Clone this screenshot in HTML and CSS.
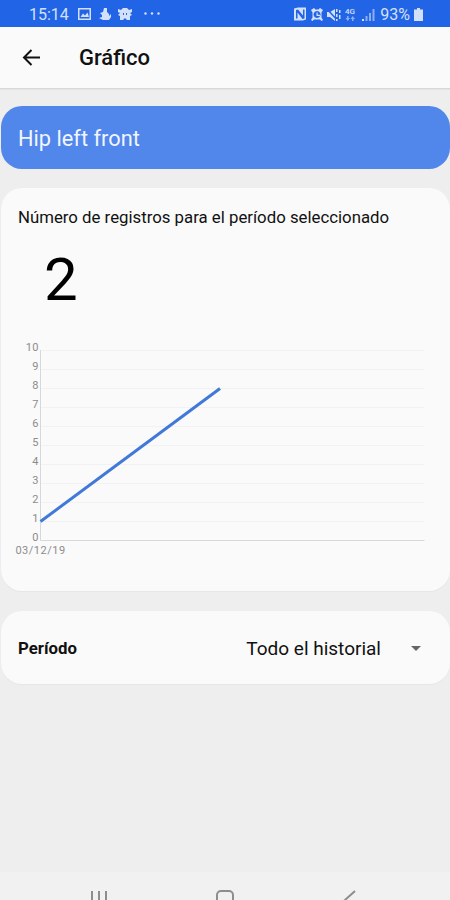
FILE: index.html
```
<!DOCTYPE html>
<html lang="es">
<head>
    <meta charset="utf-8">
    <title>Gráfico</title>
    <link rel="stylesheet" href="styles.css">
</head>
<body>
<div class="screen">
    <div class="status-bar">
        <span class="status-time">15:14</span>
        <svg class="status-left" width="84" height="16" viewBox="0 0 84 16">
            <path fill-rule="evenodd" d="M1 1h13v12H1zM2.500 2.500v9h10v-9zM3.500 10l2.500-3.500 2 2 2.500-3 1.500 4.500z"/>
            <path d="M27 1h3v4l2 2v2l2-2v3l-2 3h-6l-4-2 3-1v-2l-2-2 3-1z"/>
            <path fill-rule="evenodd" d="M41 2l3 1 2-2h4l2 2 3-1v3l-2 1 2 2-2 1v4h-3l-2-2-2 2h-3V9l-2-1 2-2-2-1zM46 6v2h1V6zm3 0v2h1V6z"/>
            <circle cx="68.500" cy="6.500" r="1.200"/>
            <circle cx="75" cy="6.500" r="1.200"/>
            <circle cx="81.500" cy="6.500" r="1.200"/>
        </svg>
        <svg class="status-right" width="82" height="16" viewBox="0 0 82 16">
            <path fill-rule="evenodd" d="M0 1.500L4 .5h8v12l-3 1H0zM2 3v8.500h1.500v-6l5 6.500 2-.5v-9H9v6l-5-6z"/>
            <path fill-rule="evenodd" d="M17 3l3-2 1.500 1.500h3L26 1l3 2-1.500 2.500v5L29 13l-1.500 1-1.500-1.500h-6L18.500 14 17 13l1.500-2.500v-5zM23 4a3.500 3.500 0 1 0 .1 0zM22.500 5.500h1.200v2.300H26V9h-3.500z"/>
            <path d="M33 5h3l5-3v12l-5-4h-3z"/>
            <path class="status-cut" d="M33 2l11 12"/>
            <path d="M42 2h1.500v3H42zM42 7h1.500v3H42zM42 12h1.500v2H42zM45 3h1.500v3H45zM45 8h1.500v4H45z"/>
            <text x="51" y="7">4G</text>
            <path class="status-dim" d="M53 9h1.500v2h1.500l-2.200 3-2.300-3H53zM58 14h1.500v-2H61l-2.200-3-2.300 3H58z"/>
            <path d="M68 12h2v2h-2z"/>
            <path class="status-dim" d="M71.500 9h2v5h-2zM75 6h2v8h-2zM78.500 2h2v12h-2z"/>
        </svg>
        <span class="status-percent">93%</span>
        <svg class="status-battery" width="9" height="14" viewBox="0 0 9 14">
            <path d="M3 0h3v1.500h3V13H0V1.500h3z"/>
        </svg>
    </div>

    <div class="app-bar">
        <svg class="back" width="20" height="20" viewBox="0 0 20 20">
            <path d="M19 9.500H3M10.500 2L3 9.500l7.500 7.500"/>
        </svg>
        <h1 class="app-title">Gráfico</h1>
    </div>

    <div class="content">
        <div class="zone">Hip left front</div>

        <div class="card chart-card">
            <div class="card-label">Número de registros para el período seleccionado</div>
            <div class="total">2</div>
            <svg class="chart" width="420" height="230" viewBox="0 0 420 230">
                <path class="grid" d="M28 18.500h384M28 37.500h384M28 56.500h384M28 75.500h384M28 94.500h384M28 113.500h384M28 132.500h384M28 151.500h384M28 170.500h384M28 189.500h384"/>
                <path class="axis" d="M28.500 18v190.500H412.500"/>
                <g class="y-labels">
                    <text x="27" y="19">10</text>
                    <text x="27" y="38">9</text>
                    <text x="27" y="57">8</text>
                    <text x="27" y="76">7</text>
                    <text x="27" y="95">6</text>
                    <text x="27" y="114">5</text>
                    <text x="27" y="133">4</text>
                    <text x="27" y="152">3</text>
                    <text x="27" y="171">2</text>
                    <text x="27" y="190">1</text>
                    <text x="27" y="208.500">0</text>
                </g>
                <text class="x-label" x="28.500" y="222">03/12/19</text>
                <path class="line" d="M28.500 189.500L208 56.500"/>
            </svg>
        </div>

        <div class="card period-card">
            <span class="period-name">Período</span>
            <span class="period-value">Todo el historial</span>
            <span class="caret"></span>
        </div>
    </div>

    <div class="nav-bar">
        <svg width="18" height="18" viewBox="0 0 18 18">
            <path d="M2 1v16M9 1v16M16 1v16"/>
        </svg>
        <svg width="18" height="18" viewBox="0 0 18 18">
            <rect x="1" y="1" width="16" height="16" rx="4"/>
        </svg>
        <svg width="18" height="18" viewBox="0 0 18 18">
            <path d="M14 1L4 10l10 8"/>
        </svg>
    </div>
</div>
</body>
</html>
```

FILE: styles.css
```
html, body {
    margin: 0;
    height: 900px;
    overflow: hidden;
    background-color: #eee;
    color: #111;
    font-family: Roboto, sans-serif;
}

.screen {
    display: flex;
    flex-direction: column;
    height: 900px;
}

.status-bar {
    display: flex;
    align-items: center;
    box-sizing: border-box;
    height: 27px;
    padding: 2px 27px 0 29px;
    background-color: #2264e6;
    color: #d3e0fa;
    fill: #d3e0fa;
    font-size: 16px;
}

.status-time {
    width: 48px;
}

.status-right {
    margin-left: auto;
    margin-right: 4px;
    font-size: 8px;
    font-weight: 500;
}

.status-cut {
    stroke: #2264e6;
    stroke-width: 1.5;
}

.status-dim {
    opacity: 0.6;
}

.status-battery {
    margin-left: 4px;
}

.app-bar {
    display: flex;
    align-items: center;
    box-sizing: border-box;
    height: 62px;
    padding-left: 21px;
    background-color: #fafafa;
    border-bottom: 1px solid #d8d8d8;
    box-shadow: 0 1px 1px #e4e4e4;
}

.back {
    fill: none;
    stroke: #111;
    stroke-width: 2;
}

.app-title {
    margin: 0 0 0 38px;
    font-size: 22px;
    font-weight: 500;
}

.content {
    display: flex;
    flex-direction: column;
    flex: 1;
    padding: 17px 0 0 1px;
}

.zone {
    box-sizing: border-box;
    height: 63px;
    margin-bottom: 19px;
    padding-left: 17px;
    border-radius: 21px;
    background-color: #5186eb;
    color: #f0f5ff;
    font-size: 21.8px;
    line-height: 65px;
}

.card {
    box-sizing: border-box;
    border-radius: 21px;
    background-color: #fafafa;
    box-shadow: 0 1px 1px #e6e6e6;
}

.chart-card {
    height: 403px;
    margin-bottom: 20px;
    padding: 18px 0 0 17px;
}

.card-label {
    font-size: 16.8px;
    line-height: 22px;
}

.total {
    margin-top: 17px;
    padding-left: 26px;
    color: #000;
    font-size: 60px;
    line-height: 70px;
}

.chart {
    display: block;
    margin: 17px 0 0 -6px;
}

.grid {
    fill: none;
    stroke: #f2f2f2;
}

.axis {
    fill: none;
    stroke: #d8d8da;
}

.y-labels, .x-label {
    fill: #8c8c8c;
    font-size: 11px;
    letter-spacing: 0.5px;
}

.y-labels {
    text-anchor: end;
}

.x-label {
    text-anchor: middle;
}

.line {
    fill: none;
    stroke: #4179d8;
    stroke-width: 3;
}

.period-card {
    display: flex;
    align-items: center;
    height: 73px;
    padding: 1px 29px 0 17px;
}

.period-name {
    font-size: 16.8px;
    font-weight: 700;
}

.period-value {
    margin-left: auto;
    font-size: 19px;
}

.caret {
    margin-left: 30px;
    border: 5px solid transparent;
    border-top-color: #666;
    border-bottom: none;
}

.nav-bar {
    display: flex;
    box-sizing: border-box;
    height: 28px;
    padding: 18px 91px 0 90px;
    justify-content: space-between;
    background-color: #f1f1f1;
    fill: none;
    stroke: #8e8e8e;
    stroke-width: 2;
    overflow: hidden;
}

.nav-bar svg {
    flex: none;
}
```
